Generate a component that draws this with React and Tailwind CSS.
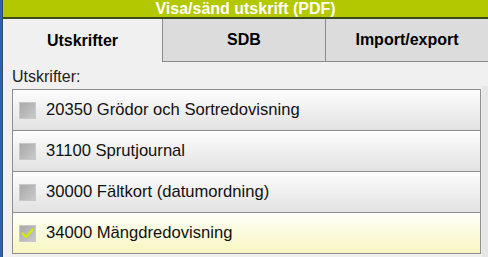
import React, { useState } from "react";

const reports = [
  { id: 20350, name: "Grödor och Sortredovisning" },
  { id: 31100, name: "Sprutjournal" },
  { id: 30000, name: "Fältkort (datumordning)" },
  { id: 34000, name: "Mängdredovisning" },
];

const tabs = ["Utskrifter", "SDB", "Import/export"];

const CheckBox = ({ checked }) => (
  <span className="flex h-[17px] w-[17px] shrink-0 items-center justify-center border border-[#c8c8c8] bg-gradient-to-br from-[#a9a9a9] to-[#c9c9c9]">
    {checked && (
      <svg width="13" height="11" viewBox="0 0 13 11">
        <path
          d="M1.5 5.5 L5 9 L11.5 1.5"
          fill="none"
          stroke="#d2ec00"
          strokeWidth="2.4"
          strokeLinecap="round"
          strokeLinejoin="round"
        />
      </svg>
    )}
  </span>
);

export default function App() {
  const [active, setActive] = useState(0);
  const [selected, setSelected] = useState([34000]);

  const toggle = (id) =>
    setSelected((s) => (s.includes(id) ? s.filter((x) => x !== id) : [...s, id]));

  return (
    <div className="flex h-[257px] w-[488px] overflow-hidden bg-[#f0f0f0] font-['Liberation_Sans',Arial,sans-serif]">
      <div className="w-[2px] shrink-0 bg-[#2d62b0]" />
      <div className="w-px shrink-0 bg-[#3a4a5e]" />
      <div className="flex min-w-0 flex-1 flex-col">
        <div className="flex h-[19px] shrink-0 items-center justify-center border-b-2 border-[#3c4a1a] bg-[#b4c800] text-[16px] font-bold leading-none text-white">
          Visa/sänd utskrift (PDF)
        </div>
        <div className="flex h-[43px] shrink-0">
          {tabs.map((t, i) => (
            <button
              key={t}
              onClick={() => setActive(i)}
              className={
                i === active
                  ? "flex w-[159px] items-center justify-center bg-[#f0f0f0] text-[16px] font-bold text-black"
                  : "flex flex-1 items-center justify-center border-b border-l border-[#8a8a8a] bg-[#dcdcdc] text-[16px] font-bold text-black"
              }
            >
              {t}
            </button>
          ))}
        </div>
        <div className="flex flex-1 pl-[9px]">
          <div className="flex min-w-0 flex-1 flex-col">
            <div className="pt-[5px] text-[16px] leading-[19px] text-[#222]">Utskrifter:</div>
            <div className="mt-[3px] flex flex-col border-l border-r border-t border-[#8e8e8e]">
              {reports.map((r) => {
                const on = selected.includes(r.id);
                return (
                  <div
                    key={r.id}
                    onClick={() => toggle(r.id)}
                    className={
                      on
                        ? "flex h-[41px] shrink-0 cursor-pointer items-center gap-[10px] border-b border-[#8e8e8e] bg-gradient-to-b from-[#fefff9] to-[#f8f6bf] pl-[6px] text-[16.6px] text-[#111]"
                        : "flex h-[41px] shrink-0 cursor-pointer items-center gap-[10px] border-b border-[#8e8e8e] bg-gradient-to-b from-[#fdfdfd] to-[#e2e2e2] pl-[6px] text-[16.6px] text-[#111]"
                    }
                  >
                    <CheckBox checked={on} />
                    <span>
                      {r.id} {r.name}
                    </span>
                  </div>
                );
              })}
            </div>
          </div>
          <div className="ml-px mt-[24px] w-[6px] shrink-0 bg-[#e6e6e6]" />
        </div>
      </div>
    </div>
  );
}
